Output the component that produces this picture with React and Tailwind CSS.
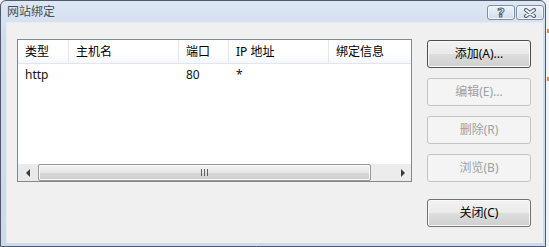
import React from "react";

const font = "font-['Noto_Sans','Noto_Sans_CJK_SC',sans-serif]";

function DlgButton({ label, disabled, isDefault }) {
  let cls =
    "h-[28px] w-[104px] rounded-[3px] border flex items-center justify-center text-[12px] leading-none ";
  if (disabled) {
    cls += "border-[#c2c5c8] bg-[#f4f4f4] text-[#a0a0a0]";
  } else {
    cls +=
      "text-[#000] bg-[linear-gradient(#f2f2f2_0%,#ebebeb_48%,#dddddd_52%,#cfcfcf_100%)] shadow-[inset_0_0_0_1px_#fbfbfb] " +
      (isDefault ? "border-[#4e4e4e]" : "border-[#707070]");
  }
  return <div className={cls}>{label}</div>;
}

function CaptionButton({ children }) {
  return (
    <div className="h-[15px] w-[28px] rounded-[3px] border border-[#7d8ea6] bg-[linear-gradient(#eef3f9,#d2ddeb)] shadow-[inset_0_0_0_1px_#f4f7fb] flex items-center justify-center">
      {children}
    </div>
  );
}

const columns = [
  { label: "类型", w: "w-[51px]" },
  { label: "主机名", w: "w-[110px]" },
  { label: "端口", w: "w-[50px]" },
  { label: "IP 地址", w: "w-[100px]" },
  { label: "绑定信息", w: "w-[100px]" },
];

const rows = [["http", "", "80", "*", ""]];

export default function App() {
  return (
    <div className={`w-[549px] h-[247px] bg-[#f3f3f3] flex overflow-hidden ${font}`}>
      <div className="w-[546px] h-[247px] shrink-0 border border-[#4f5b6b] rounded-t-[6px] bg-[linear-gradient(#dde7f4,#cfdcee_40px,#cddaeb)] flex flex-col">
        {/* title bar */}
        <div className="h-[21px] shrink-0 flex items-start">
          <div className="pl-[6px] pt-[5px] text-[12px] leading-none text-[#4b4f55]">网站绑定</div>
          <div className="ml-auto mr-[1px] mt-[4px] flex gap-[1px]">
            <CaptionButton>
              <span className="text-[13px] font-bold leading-none text-[#f4f7fb] [-webkit-text-stroke:1px_#4e5d72] font-['DejaVu_Sans',sans-serif]">?</span>
            </CaptionButton>
            <CaptionButton>
              <svg width="14" height="10" viewBox="0 0 14 10">
                <path d="M3 2 L11 8 M11 2 L3 8" stroke="#4e5d72" strokeWidth="4" strokeLinecap="round" />
                <path d="M3 2 L11 8 M11 2 L3 8" stroke="#f4f7fb" strokeWidth="2" strokeLinecap="round" />
              </svg>
            </CaptionButton>
          </div>
        </div>

        {/* client area */}
        <div className="flex-1 ml-[5px] mr-[2px] mb-[3px] bg-[#f0f0f0] border-l border-t border-[#e4ebf4] flex pl-[10px] pt-[16px] gap-[15px]">
          {/* list view */}
          <div className="w-[395px] h-[143px] border border-[#828790] bg-white flex flex-col">
            <div className="h-[24px] shrink-0 flex border-b border-[#e2e5ea] bg-[linear-gradient(#ffffff,#ffffff_60%,#f5f7fa)]">
              {columns.map((c, i) => (
                <div
                  key={i}
                  className={`${c.w} shrink-0 flex items-center pl-[7px] text-[12px] leading-none text-black border-r border-[#e3e8ef]`}
                >
                  {c.label}
                </div>
              ))}
            </div>
            <div className="flex-1">
              {rows.map((r, ri) => (
                <div key={ri} className="h-[21px] flex items-center">
                  {r.map((cell, ci) => (
                    <div
                      key={ci}
                      className={`${columns[ci].w} shrink-0 pl-[7px] text-[12px] leading-none text-[#111]`}
                    >
                      {cell}
                    </div>
                  ))}
                </div>
              ))}
            </div>
            {/* horizontal scrollbar */}
            <div className="h-[17px] shrink-0 flex bg-[#eaeaea]">
              <div className="w-[20px] flex items-center justify-center">
                <svg width="5" height="8" viewBox="0 0 5 8">
                  <path d="M4 0 L0 4 L4 8 Z" fill="#3a3a3a" />
                </svg>
              </div>
              <div className="w-[333px] rounded-[2px] border border-[#979797] bg-[linear-gradient(#f3f3f3,#e6e6e6_50%,#d6d6d6_55%,#cfcfcf)] shadow-[inset_0_0_0_1px_#f9f9f9] flex items-center justify-center gap-[2px]">
                <span className="w-[1px] h-[7px] bg-[#5f5f5f]" />
                <span className="w-[1px] h-[7px] bg-[#5f5f5f]" />
                <span className="w-[1px] h-[7px] bg-[#5f5f5f]" />
              </div>
              <div className="flex-1 bg-[#ececec]" />
              <div className="w-[18px] bg-[#ececec] flex items-center justify-center">
                <svg width="5" height="8" viewBox="0 0 5 8">
                  <path d="M1 0 L5 4 L1 8 Z" fill="#3a3a3a" />
                </svg>
              </div>
            </div>
          </div>

          {/* buttons */}
          <div className="mt-[1px] flex flex-col gap-[10px]">
            <DlgButton label="添加(A)..." isDefault />
            <DlgButton label="编辑(E)..." disabled />
            <DlgButton label="删除(R)" disabled />
            <DlgButton label="浏览(B)" disabled />
            <div className="mt-[7px]">
              <DlgButton label="关闭(C)" />
            </div>
          </div>
        </div>
      </div>
      <div className="flex-1 flex flex-col items-end pt-[29px] gap-[44px]">
        <span className="w-[2px] h-[4px] bg-[#e0902a]" />
        <span className="w-[2px] h-[4px] bg-[#e0902a]" />
      </div>
    </div>
  );
}
